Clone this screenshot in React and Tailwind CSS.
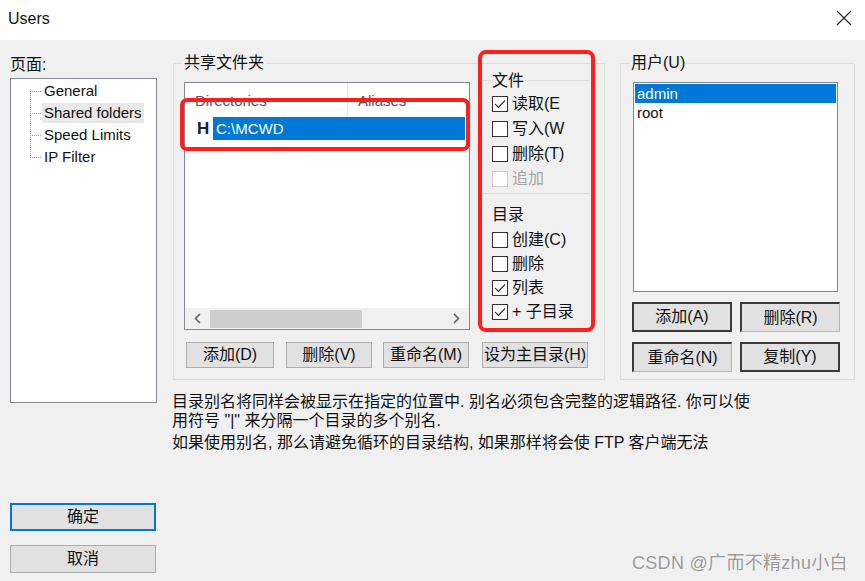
import React from 'react';

const FONT = '"Liberation Sans", "Noto Sans CJK SC", sans-serif';

// windows style check box, 16px square
const CheckBox = ({ label, checked, disabled, rowClass }) => (
  <div className={`flex items-center pl-[10px] ${rowClass}`}>
    <span
      className={`w-[16px] h-[16px] border bg-white flex items-center justify-center ${
        disabled ? 'border-[#cfcfcf]' : 'border-[#333333]'
      }`}
    >
      {checked && (
        <svg width="14" height="14" viewBox="0 0 14 14">
          <polyline points="2,7 5.5,10.5 12,3.5" fill="none" stroke="#333" strokeWidth="1.2" />
        </svg>
      )}
    </span>
    <span className={`ml-[4px] text-[16px] leading-[18px] ${disabled ? 'text-[#a6a6a6]' : 'text-[#111]'}`}>
      {label}
    </span>
  </div>
);

const Button = ({ children, className }) => (
  <button className={`bg-[#e1e1e1] text-[16px] leading-[18px] text-[#111] flex items-center justify-center ${className}`}>
    {children}
  </button>
);

const TreeLines = () => (
  <svg width="12" height="88" viewBox="0 0 12 88" className="shrink-0">
    <g stroke="#9a9a9a" strokeWidth="1" strokeDasharray="1 1" fill="none">
      <line x1="0.5" y1="11" x2="0.5" y2="77" />
      <line x1="0" y1="11.5" x2="11" y2="11.5" />
      <line x1="0" y1="33.5" x2="11" y2="33.5" />
      <line x1="0" y1="55.5" x2="11" y2="55.5" />
      <line x1="0" y1="77.5" x2="11" y2="77.5" />
    </g>
  </svg>
);

const pages = ['General', 'Shared folders', 'Speed Limits', 'IP Filter'];

export default function App() {
  return (
    <div className="w-[865px] h-[581px] bg-[#f0f0f0] flex flex-col relative overflow-hidden" style={{ fontFamily: FONT }}>
      {/* title bar */}
      <div className="h-[40px] bg-white flex items-center justify-between pl-[8px] pr-[12px]">
        <span className="text-[16px] leading-[20px] text-[#111] -mt-[3px]">Users</span>
        <svg width="16" height="16" viewBox="0 0 16 16" className="-mt-[4px] mr-[1px]">
          <path d="M1 1 L15 15 M15 1 L1 15" stroke="#222" strokeWidth="1.1" />
        </svg>
      </div>

      <div className="flex flex-1 pl-[10px]">
        {/* left column */}
        <div className="w-[147px] flex flex-col">
          <div className="mt-[17px] text-[16px] leading-[16px] text-[#111]">页面:</div>
          <div className="mt-[5px] h-[325px] bg-white border border-[#828790] flex">
            <div className="ml-[19px] mt-[1px]">
              <TreeLines />
            </div>
            <div className="flex flex-col mt-[1px]">
              {pages.map((p) => (
                <div key={p} className="h-[22px] flex items-center">
                  <span
                    className={`px-[2px] text-[15px] leading-[20px] text-[#111] ${
                      p === 'Shared folders' ? 'bg-[#e8e8e8]' : ''
                    }`}
                  >
                    {p}
                  </span>
                </div>
              ))}
            </div>
          </div>
          <Button className="mt-[100px] h-[28px] w-[146px] border-2 border-[#0078d7]">确定</Button>
          <Button className="mt-[14px] h-[28px] w-[146px] border border-[#adadad]">取消</Button>
        </div>

        {/* main area */}
        <div className="ml-[16px] flex flex-col">
          <div className="mt-[23px] flex">
            {/* shared folders group */}
            <div className="relative w-[432px] h-[317px] border border-[#dcdcdc] pl-[10px] pt-[18px]">
              <span className="absolute -top-[10px] left-[9px] px-[1px] bg-[#f0f0f0] text-[16px] leading-[18px] text-[#111]">
                共享文件夹
              </span>
              <div className="flex">
                {/* directory list */}
                <div className="w-[286px] h-[248px] bg-white border border-[#828790] flex flex-col">
                  <div className="h-[34px] flex text-[15px] leading-[18px] text-[#555]">
                    <div className="w-[163px] border-r border-[#e5e5e5] pl-[10px] pt-[9px]">Directories</div>
                    <div className="pl-[10px] pt-[9px]">Aliases</div>
                  </div>
                  <div className="h-[23px] flex items-center">
                    <span className="w-[28px] pl-[12px] text-[17px] leading-[20px] font-bold text-[#0f2038]">H</span>
                    <div className="w-[252px] h-[23px] bg-[#0078d7] text-white text-[15px] leading-[23px] pl-[3px]">
                      C:\MCWD
                    </div>
                  </div>
                  <div className="flex-1" />
                  <div className="h-[21px] bg-[#f0f0f0] flex items-center">
                    <div className="w-[25px] flex justify-center">
                      <svg width="7" height="11" viewBox="0 0 7 11">
                        <polyline points="6,1 1.5,5.5 6,10" fill="none" stroke="#606060" strokeWidth="1.6" />
                      </svg>
                    </div>
                    <div className="w-[152px] h-[18px] bg-[#cdcdcd]" />
                    <div className="flex-1" />
                    <div className="w-[25px] flex justify-center">
                      <svg width="7" height="11" viewBox="0 0 7 11">
                        <polyline points="1,1 5.5,5.5 1,10" fill="none" stroke="#606060" strokeWidth="1.6" />
                      </svg>
                    </div>
                  </div>
                </div>

                {/* permissions */}
                <div className="ml-[12px] w-[108px] flex flex-col">
                  <div className="relative -mt-[2px] border-t border-b border-[#dcdcdc] pt-[10px] pb-[2px]">
                    <span className="absolute -top-[9px] left-[9px] px-[1px] bg-[#f0f0f0] text-[16px] leading-[18px] text-[#111]">
                      文件
                    </span>
                    <CheckBox label="读取(E" checked rowClass="h-[25px]" />
                    <CheckBox label="写入(W" rowClass="h-[25px]" />
                    <CheckBox label="删除(T)" rowClass="h-[25px]" />
                    <CheckBox label="追加" disabled rowClass="h-[25px]" />
                  </div>
                  <div className="mt-[12px] pl-[10px] text-[16px] leading-[18px] text-[#111]">目录</div>
                  <div className="mt-[4px]">
                    <CheckBox label="创建(C)" rowClass="h-[24px]" />
                    <CheckBox label="删除" rowClass="h-[24px]" />
                    <CheckBox label="列表" checked rowClass="h-[24px]" />
                    <CheckBox label="+ 子目录" checked rowClass="h-[24px]" />
                  </div>
                </div>
              </div>

              <div className="mt-[12px] ml-[2px] flex">
                <Button className="w-[88px] h-[26px] border border-[#adadad]">添加(D)</Button>
                <Button className="ml-[12px] w-[86px] h-[26px] border border-[#adadad]">删除(V)</Button>
                <Button className="ml-[11px] w-[86px] h-[26px] border border-[#adadad]">重命名(M)</Button>
                <Button className="ml-[13px] w-[106px] h-[26px] border border-[#adadad]">设为主目录(H)</Button>
              </div>
            </div>

            {/* users group */}
            <div className="relative ml-[15px] w-[235px] h-[317px] border border-[#dcdcdc] pl-[11px] pt-[18px]">
              <span className="absolute -top-[10px] left-[9px] px-[1px] bg-[#f0f0f0] text-[16px] leading-[18px] text-[#111]">
                用户(U)
              </span>
              <div className="ml-[1px] w-[205px] h-[210px] bg-white border border-[#828790] p-[1px] text-[15px]">
                <div className="h-[19px] bg-[#0078d7] text-white leading-[19px] pl-[2px]">admin</div>
                <div className="h-[19px] text-[#111] leading-[19px] pl-[2px]">root</div>
              </div>
              <div className="mt-[10px] flex">
                <Button className="w-[100px] h-[30px] border-2 border-[#3a3a3a]">添加(A)</Button>
                <Button className="ml-[8px] w-[100px] h-[30px] border-t-2 border-l-2 border-r border-b border-t-[#3a3a3a] border-l-[#3a3a3a] border-r-[#b5b5b5] border-b-[#b5b5b5]">
                  删除(R)
                </Button>
              </div>
              <div className="mt-[10px] flex">
                <Button className="w-[100px] h-[30px] border-t-2 border-l-2 border-r border-b border-t-[#3a3a3a] border-l-[#3a3a3a] border-r-[#b5b5b5] border-b-[#b5b5b5]">
                  重命名(N)
                </Button>
                <Button className="ml-[8px] w-[100px] h-[30px] border-2 border-[#3a3a3a]">复制(Y)</Button>
              </div>
            </div>
          </div>

          {/* help text */}
          <div className="mt-[12px] -ml-[1px] text-[16px] leading-[19px] text-[#111]">
            <div>目录别名将同样会被显示在指定的位置中. 别名必须包含完整的逻辑路径. 你可以使</div>
            <div>用符号 "|" 来分隔一个目录的多个别名.</div>
            <div className="mt-[3px]">如果使用别名, 那么请避免循环的目录结构, 如果那样将会使 FTP 客户端无法</div>
          </div>
        </div>
      </div>

      {/* red annotation boxes */}
      <div className="absolute left-[180px] top-[98px] w-[290px] h-[53px] border-4 border-[#ff1d1d] rounded-[7px]" />
      <div className="absolute left-[478px] top-[50px] w-[117px] h-[282px] border-4 border-[#ff1d1d] rounded-[8px]" />

      {/* watermark */}
      <div className="absolute left-[632px] top-[552px] text-[18px] leading-[22px] tracking-[0.3px] text-[#9a9a9a] [text-shadow:0_0_2px_#ffffff]">
        CSDN @广而不精zhu小白
      </div>
    </div>
  );
}
